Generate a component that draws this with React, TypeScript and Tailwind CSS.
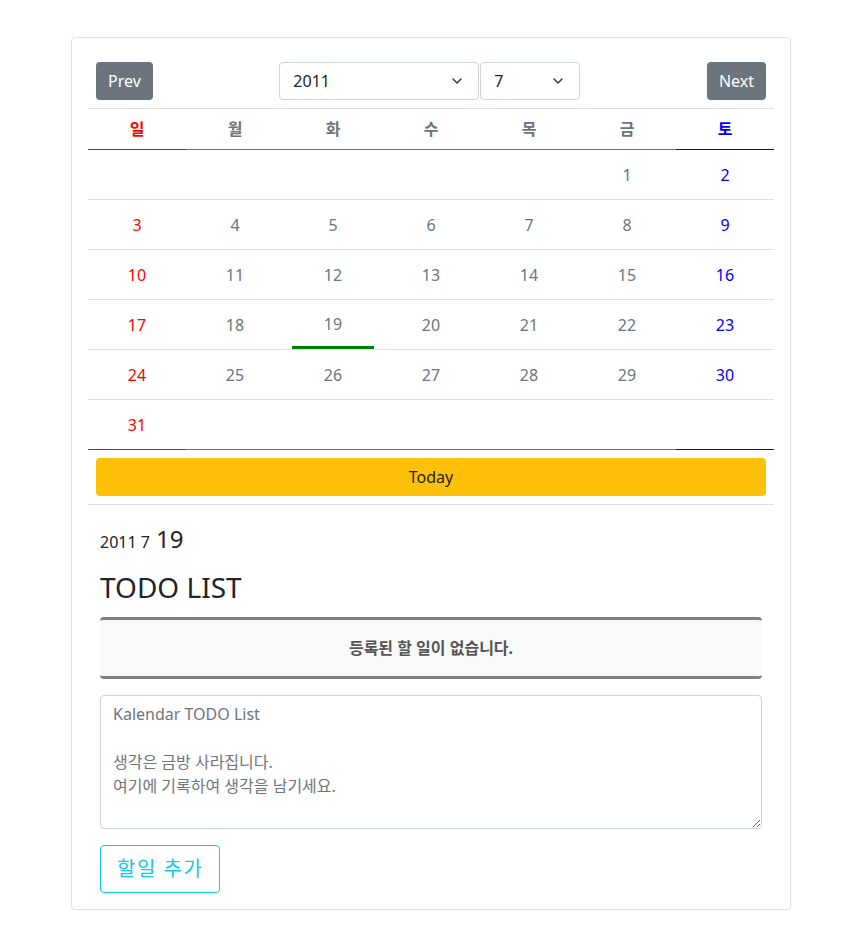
import { ChevronDown } from 'lucide-react';

const weekdays = ['일', '월', '화', '수', '목', '금', '토'];

// July 2011 starts on Friday
const weeks: (number | null)[][] = [
  [null, null, null, null, null, 1, 2],
  [3, 4, 5, 6, 7, 8, 9],
  [10, 11, 12, 13, 14, 15, 16],
  [17, 18, 19, 20, 21, 22, 23],
  [24, 25, 26, 27, 28, 29, 30],
  [31, null, null, null, null, null, null],
];

const dayColor = (i: number) =>
  i === 0 ? 'text-[#ff0000]' : i === 6 ? 'text-[#0000ff]' : 'text-[#6c757d]';

const edgeColor = (i: number) =>
  i === 0 ? 'border-[#ff0000]' : i === 6 ? 'border-[#0000ff]' : 'border-[#6c757d]';

export default function App() {
  return (
    <div
      className="min-h-[938px] bg-white pt-[37px] pl-[71px] text-[#212529]"
      style={{ fontFamily: '"Noto Sans", "Noto Sans CJK KR", sans-serif' }}
    >
      <div className="w-[720px] border border-[#dfe1e5] rounded-[4px] p-4">
        {/* Header controls */}
        <div className="flex items-center justify-between p-2">
          <button className="h-[38px] px-3 rounded-[4px] bg-[#6c757d] text-white text-base">Prev</button>
          <div className="flex">
            <div className="w-[200px] h-[38px] border border-[#ced4da] rounded-[4px] flex items-center justify-between pl-[13px] pr-[13px] text-base">
              <span>2011</span>
              <ChevronDown className="w-4 h-4 text-[#343a40]" strokeWidth={2.2} />
            </div>
            <div className="w-[100px] h-[38px] ml-px border border-[#ced4da] rounded-[4px] flex items-center justify-between pl-[13px] pr-[13px] text-base">
              <span>7</span>
              <ChevronDown className="w-4 h-4 text-[#343a40]" strokeWidth={2.2} />
            </div>
          </div>
          <button className="h-[38px] px-3 rounded-[4px] bg-[#6c757d] text-white text-base">Next</button>
        </div>

        {/* Weekday names */}
        <div className="grid grid-cols-7 border-t border-[#dee2e6]">
          {weekdays.map((d, i) => (
            <div
              key={d}
              className={`h-[41px] flex items-center justify-center font-semibold text-base border-b ${dayColor(i)} ${edgeColor(i)}`}
            >
              {d}
            </div>
          ))}
        </div>

        {/* Days */}
        {weeks.map((week, wi) => (
          <div key={wi} className="grid grid-cols-7">
            {week.map((day, i) => {
              const last = wi === weeks.length - 1;
              return (
                <div
                  key={i}
                  className={`h-[50px] flex items-stretch justify-center text-base border-b ${last ? edgeColor(i) : 'border-[#dee2e6]'} ${dayColor(i)}`}
                >
                  {day === 19 ? (
                    <div className="w-[82px] flex items-center justify-center border-b-[3px] border-[#008000] pt-[2px]">
                      {day}
                    </div>
                  ) : (
                    <div className="flex items-center justify-center">{day ?? ''}</div>
                  )}
                </div>
              );
            })}
          </div>
        ))}

        {/* Today */}
        <div className="p-2 border-b border-[#dee2e6]">
          <button className="w-full h-[38px] rounded-[4px] bg-[#ffc107] text-[#212529] text-base">Today</button>
        </div>

        {/* Selected date + todo */}
        <div className="px-3">
          <div className="mt-[18px] flex items-baseline gap-[6px]">
            <span className="text-base">2011 7</span>
            <span className="text-2xl">19</span>
          </div>
          <h3 className="mt-[16px] text-[28px] leading-[1.2]">TODO LIST</h3>
          <div className="mt-[12px] h-[62px] border-y-[3px] border-[#808080] rounded-[4px] bg-[#f9f9f9] flex items-center justify-center font-bold text-[#555555] text-base">
            등록된 할 일이 없습니다.
          </div>
          <textarea
            className="mt-4 block w-full h-[134px] border border-[#ced4da] rounded-[4px] px-3 py-[6px] text-base leading-6 placeholder:text-[#6c757d] outline-none"
            placeholder={'Kalendar TODO List\n\n생각은 금방 사라집니다.\n여기에 기록하여 생각을 남기세요.'}
          />
          <button className="mt-4 h-[48px] px-4 rounded-[4px] border border-[#0dcaf0] text-[#0dcaf0] text-xl tracking-[1.5px]">
            할일 추가
          </button>
        </div>
      </div>
    </div>
  );
}
